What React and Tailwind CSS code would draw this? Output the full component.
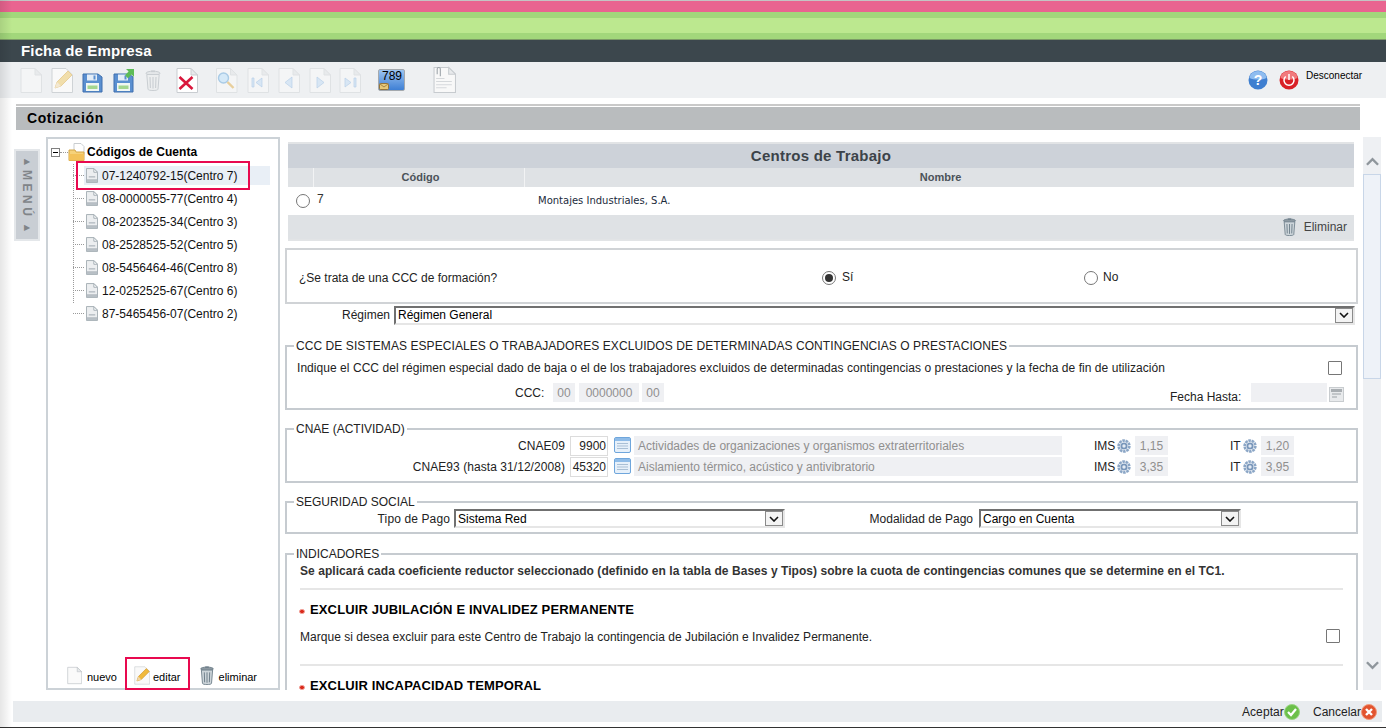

const FONT = "font-['Liberation_Sans',Arial,sans-serif]";

function PageIcon({ className = "", children, fold = "#e8eaec", stroke = "#cfd3d6", fill = "#fbfbfb" }) {
  return (
    <svg viewBox="0 0 22 25" className={className} fill="none">
      <path d="M1 .5h14l6.5 6.5v17.5H1z" fill={fill} stroke={stroke} />
      <path d="M15 .5V7h6.5z" fill={fold} stroke={stroke} />
      {children}
    </svg>
  );
}

function Floppy({ arrow }) {
  return (
    <svg viewBox="0 0 22 25" className="w-[22px] h-[25px]">
      <path d="M1 6h15l4 3v15H1z" fill="#5a8fd0" stroke="#3f6fae" />
      <rect x="5" y="6.5" width="10" height="6" fill="#e4edf7" />
      <rect x="11.5" y="7.5" width="2" height="4" fill="#5a8fd0" />
      <rect x="4" y="15" width="13" height="8" fill="#f1f6f3" />
      <rect x="5.5" y="17.5" width="10" height="3.5" fill="#a4d68f" />
      {arrow && <path d="M13 1h8v8l-2.4-2.4-3.6 3.6-3-3 3.6-3.6z" fill="#5dbb56" />}
    </svg>
  );
}

function Trash({ className = "", faded }) {
  const c = faded ? "#c9ced2" : "#6f7f8b";
  return (
    <svg viewBox="0 0 16 21" className={className}>
      <ellipse cx="8" cy="3.2" rx="7" ry="2" fill={faded ? "#e4e7e9" : "#8c98a1"} stroke={c} />
      <rect x="6" y=".5" width="4" height="1.6" fill={c} />
      <path d="M1.8 4.5h12.4L13 19.2c-.1.9-2.4 1.3-5 1.3s-4.9-.4-5-1.3z" fill={faded ? "#eceeef" : "#cdd5da"} stroke={c} />
      <path d="M5 7l.4 11M8 7v11.5M11 7l-.4 11" stroke={c} strokeWidth="1.1" />
    </svg>
  );
}

function Pencil({ className = "", faded }) {
  return (
    <svg viewBox="0 0 22 25" className={className}>
      <path d="M1 .5h14l6.5 6.5v17.5H1z" fill="#f9f9f9" stroke="#cfd3d6" />
      <path d="M4 20l2-6L17 3l4 4-11 11z" fill={faded ? "#f1deab" : "#f0b93c"} stroke={faded ? "#e4c98d" : "#c98f22"} strokeWidth=".8" />
      <path d="M4 20l2-6 4 4z" fill={faded ? "#f3e8d2" : "#f0d7a8"} />
    </svg>
  );
}

function NavDoc({ d }) {
  return (
    <PageIcon className="w-[22px] h-[25px]" fill="#f4f5f6" stroke="#dfe2e4">
      <path d={d} fill="#d8e6f4" stroke="#b9d0e8" strokeWidth=".7" />
    </PageIcon>
  );
}

function LeafDoc() {
  return (
    <svg viewBox="0 0 13 16" className="w-[12px] h-[15px] shrink-0">
      <path d="M.5.5h8l4 4v11H.5z" fill="#eceef0" stroke="#a2abb2" />
      <path d="M8.5.5v4h4z" fill="#fff" stroke="#a2abb2" />
      <path d="M3 9.5h7" stroke="#9aa3aa" />
      <rect x="1" y="12" width="11" height="3" fill="#b7bec4" />
    </svg>
  );
}

function ListIcon() {
  return (
    <svg viewBox="0 0 17 16" className="w-[17px] h-[16px] shrink-0">
      <rect x=".5" y=".5" width="16" height="15" rx="1.5" fill="#e6f0fa" stroke="#6fa6dc" />
      <rect x="1" y="1" width="15" height="3" fill="#8fbce8" />
      <path d="M3 6.5h11M3 9h11M3 11.5h11" stroke="#a9bfd5" />
    </svg>
  );
}

function Gear() {
  return (
    <svg viewBox="0 0 14 14" className="w-[14px] h-[14px] shrink-0 mt-[3px]">
      <circle cx="7" cy="7" r="5.4" fill="none" stroke="#8ba6c6" strokeWidth="2.6" strokeDasharray="2.6 .7" />
      <circle cx="7" cy="7" r="3.6" fill="#7896ba" />
      <circle cx="7" cy="7" r="1.7" fill="#e4ebf3" />
    </svg>
  );
}

function Bullet() {
  return <span className="block w-[6px] h-[5px] rounded-full bg-[#d92a1c] border border-[#f3a49b] mt-[3px] shrink-0" />;
}

function Check({ className = "" }) {
  return <span className={`block w-[14px] h-[14px] border border-[#767676] bg-white rounded-[1px] shrink-0 ${className}`} />;
}

function Radio({ on }) {
  return (
    <span className="flex items-center justify-center w-[14px] h-[14px] rounded-full border border-[#767676] bg-white shrink-0">
      {on && <span className="block w-[8px] h-[8px] rounded-full bg-[#333]" />}
    </span>
  );
}

function SelectBox({ value, className = "" }) {
  return (
    <div className={`flex items-center h-[19px] border-t-2 border-l-2 border-[#707070] border-b-2 border-b-[#e6e6e6] border-r-2 border-r-[#e6e6e6] bg-white ${className}`}>
      <span className="flex-1 pl-[2px] pt-px text-[12px] text-black leading-[15px]">{value}</span>
      <span className="flex items-center justify-center w-[18px] h-[15px] border border-[#8a8a8a] bg-[#f3f3f3]">
        <svg viewBox="0 0 10 6" className="w-[10px] h-[6px]"><path d="M1 1l4 4 4-4" fill="none" stroke="#111" strokeWidth="1.6" /></svg>
      </span>
    </div>
  );
}

function Grey({ className = "", children }) {
  return <span className={`flex items-center h-[19px] pt-px bg-[#eff0f3] text-[#8f8f8f] text-[12px] shrink-0 ${className}`}>{children}</span>;
}

function Field({ title, className = "", legendClass = "", children }) {
  return (
    <fieldset className={`border-2 border-[#c6cbd0] mx-0 min-w-0 ${className}`}>
      <legend className={`ml-[7px] px-[2px] text-[12px] leading-[14px] text-[#222] ${legendClass}`}>{title}</legend>
      {children}
    </fieldset>
  );
}

const nodes = [
  "07-1240792-15(Centro 7)",
  "08-0000055-77(Centro 4)",
  "08-2023525-34(Centro 3)",
  "08-2528525-52(Centro 5)",
  "08-5456464-46(Centro 8)",
  "12-0252525-67(Centro 6)",
  "87-5465456-07(Centro 2)",
];

function Toolbar() {
  return (
    <div className="flex items-center h-[36px] bg-[#eef0f2] pl-[20px] pr-[24px] shrink-0">
      <PageIcon className="w-[22px] h-[25px]" fill="#f4f5f6" stroke="#dfe2e4" />
      <span className="ml-[9px]"><Pencil className="w-[22px] h-[25px] block" faded /></span>
      <span className="ml-[9px]"><Floppy /></span>
      <span className="ml-[9px]"><Floppy arrow /></span>
      <span className="ml-[10px]"><Trash className="w-[16px] h-[21px] block" faded /></span>
      <span className="ml-[15px]">
        <PageIcon className="w-[22px] h-[25px] block" fill="#fff" stroke="#c9cdd1">
          <path d="M3.5 9l13 12M16.5 9l-13 12" stroke="#d9173c" strokeWidth="2.6" />
        </PageIcon>
      </span>
      <span className="ml-[17px]">
        <PageIcon className="w-[23px] h-[25px] block" fill="#f4f5f6" stroke="#dfe2e4">
          <circle cx="8" cy="10" r="5" fill="#d5e9f8" stroke="#a9cbe6" strokeWidth="1.4" />
          <path d="M12 14l6 6" stroke="#e8cf9c" strokeWidth="2.4" />
        </PageIcon>
      </span>
      <span className="ml-[9px]"><NavDoc d="M5 10h2v9H5zM15 10v9l-6-4.5z" /></span>
      <span className="ml-[9px]"><NavDoc d="M14 9v11l-7-5.5z" /></span>
      <span className="ml-[9px]"><NavDoc d="M8 9v11l7-5.5z" /></span>
      <span className="ml-[8px]"><NavDoc d="M15 10h2v9h-2zM6 10v9l6-4.5z" /></span>
      <span className="ml-[17px] relative block w-[27px] h-[22px] rounded-[2px] bg-gradient-to-b from-[#9cc4f0] to-[#3e7fd4] border border-[#a4a9ae]">
        <span className="absolute right-[2px] top-[-1px] text-[12px] leading-[14px] text-black">789</span>
        <svg viewBox="0 0 10 7" className="absolute left-0 bottom-0 w-[10px] h-[7px]"><rect x=".5" y=".5" width="9" height="6" rx="1" fill="#e6c878" stroke="#94743a" /><path d="M1 1l4 3 4-3" fill="none" stroke="#94743a" strokeWidth=".8" /></svg>
      </span>
      <span className="ml-[28px]">
        <PageIcon className="w-[23px] h-[28px] block" fill="#f8f8f8" stroke="#c7cbcf">
          <path d="M3 11h8M3 14h15M3 17h15M3 20h10" stroke="#d5d8db" />
          <path d="M4 7V2a1.5 1.5 0 013 0v7" fill="none" stroke="#9ba2a8" />
        </PageIcon>
      </span>
      <span className="ml-auto flex items-center">
        <svg viewBox="0 0 20 20" className="w-[20px] h-[20px]">
          <circle cx="10" cy="10" r="9.5" fill="#3f7fd0" />
          <path d="M1.5 8a8.5 7 0 0117 0c-4 2-13 2-17 0z" fill="#8fbdf0" />
          <text x="10" y="15" textAnchor="middle" fontSize="14" fontWeight="700" fill="#fff" fontFamily="Liberation Sans">?</text>
        </svg>
        <svg viewBox="0 0 20 20" className="w-[20px] h-[20px] ml-[11px]">
          <circle cx="10" cy="10" r="9.5" fill="#d91f26" />
          <path d="M1.5 8a8.5 7 0 0117 0c-4 2-13 2-17 0z" fill="#f17a7d" />
          <path d="M6.7 6.5a5 5 0 106.6 0" fill="none" stroke="#fff" strokeWidth="1.5" />
          <path d="M10 4v6" stroke="#fff" strokeWidth="1.5" />
        </svg>
        <span className="ml-[7px] w-[56px] text-[10px] leading-[12px] -mt-[8px] text-black">Desconectar</span>
      </span>
    </div>
  );
}

function Tree() {
  return (
    <div className="relative w-[234px] h-[553px] ml-[6px] border-2 border-[#ccd2d7] flex flex-col bg-white shrink-0">
      <div className="flex items-center h-[24px] pt-[3px] pl-[3px]">
        <span className="flex items-center justify-center w-[9px] h-[9px] border border-[#808080] bg-white">
          <span className="block w-[5px] h-px bg-black" />
        </span>
        <span className="w-[8px] border-t border-dotted border-[#999]" />
        <svg viewBox="0 0 17 18" className="w-[17px] h-[18px] -mt-[1px]">
          <path d="M6 .5h7l3 3v8H6z" fill="#fff" stroke="#c9cdd0" />
          <path d="M1 7h6l1 2h8v8.5H1z" fill="#f6d27a" stroke="#d3a648" />
          <path d="M1 11h15v6.5H1z" fill="#f3c25a" />
        </svg>
        <span className="ml-[2px] text-[12px] tracking-[0.05px] font-bold text-black leading-[15px]">Códigos de Cuenta</span>
      </div>
      <div className="relative ml-[25px] mt-[1px]">
        <span className="absolute left-0 top-0 h-[139px] border-l border-dotted border-[#9a9a9a]" />
        {nodes.map((n, i) => (
          <div key={n} className="flex items-center h-[23px]">
            <span className="w-[11px] border-t border-dotted border-[#9a9a9a] shrink-0" />
            <span className={`flex items-center h-[19px] w-[186px] ${i === 0 ? "bg-[#e9eff6]" : ""}`}>
              <span className="ml-[2px]"><LeafDoc /></span>
              <span className="ml-[4px] text-[12px] leading-[14px] text-[#111]">{n}</span>
            </span>
          </div>
        ))}
      </div>
      <div className="mt-auto flex items-end h-[31px] pb-[3px] pl-[19px] text-[11px] leading-[13px] text-black">
        <PageIcon className="w-[15px] h-[19px]" fill="#fafafa" stroke="#bfc4c8" />
        <span className="ml-[5px] mb-[1px]">nuevo</span>
        <span className="ml-[17px]"><Pencil className="w-[16px] h-[19px] block" /></span>
        <span className="ml-[3px] mb-[1px]">editar</span>
        <span className="ml-[18px]"><Trash className="w-[16px] h-[19px] block" /></span>
        <span className="ml-[4px] mb-[1px]">eliminar</span>
      </div>
      <span className="absolute left-[28px] top-[22px] w-[174px] h-[29px] border-2 border-[#e8094f]" />
      <span className="absolute left-[77px] top-[518px] w-[65px] h-[33px] border-2 border-[#e8094f]" />
    </div>
  );
}

function Menu() {
  return (
    <div className="w-[26px] h-[92px] ml-[14px] mt-[12px] border-2 border-[#e4e7ea] bg-[#c9ced4] flex flex-col items-center justify-center gap-[4px] text-[#808488] shrink-0">
      <span className="text-[8px] leading-[8px]">▶</span>
      <span className="text-[12px] font-bold leading-[12px] tracking-[3.5px] [writing-mode:vertical-rl]">MENÚ</span>
      <span className="text-[8px] leading-[8px]">▶</span>
    </div>
  );
}

function Panel() {
  return (
    <div className="ml-[5px] w-[1073px] h-[553px] overflow-hidden shrink-0 text-[12px] text-[#222]">
      <div className="ml-[3px] w-[1066px] mt-[5px] border-t-2 border-b-2 border-[#e2e4e6]">
        <div className="h-[24px] bg-[#cdd2d9] flex items-center justify-center text-[15px] tracking-[0.25px] font-bold text-[#3c4349]">Centros de Trabajo</div>
        <div className="flex h-[19px] bg-[#dfe2e5] text-[11px] font-bold text-[#4b5259] leading-[19px] text-center">
          <span className="w-[25px]" />
          <span className="w-[211px] border-l border-[#f2f3f4] pl-[3px]">Código</span>
          <span className="flex-1 border-l border-[#f2f3f4] pl-[2px]">Nombre</span>
        </div>
        <div className="flex items-center h-[28px] bg-white">
          <span className="ml-[8px] -mt-[1px]"><Radio /></span>
          <span className="ml-[7px] -mt-[4px] w-[221px] text-[12px] text-[#333]">7</span>
          <span className="-mt-[1px] font-['DejaVu_Sans',sans-serif] text-[10px] text-[#1c2b3c]">Montajes Industriales, S.A.</span>
        </div>
        <div className="flex items-center justify-end h-[24px] bg-[#dfe2e5] pr-[7px] text-[12px] text-[#444]">
          <Trash className="w-[15px] h-[18px]" />
          <span className="ml-[7px]">Eliminar</span>
        </div>
      </div>
      <div className="mt-[7px] h-[56px] pt-[3px] border-2 border-[#d0d3d6] flex items-center">
        <span className="ml-[12px] w-[523px]">¿Se trata de una CCC de formación?</span>
        <Radio on />
        <span className="ml-[6px] w-[242px] -mt-[2px]">Sí</span>
        <Radio />
        <span className="ml-[5px] -mt-[2px]">No</span>
      </div>
      <div className="flex items-center h-[20px] mt-[1px]">
        <span className="w-[105px] text-right">Régimen</span>
        <SelectBox value="Régimen General" className="ml-[4px] w-[961px]" />
      </div>
      <Field title="CCC DE SISTEMAS ESPECIALES O TRABAJADORES EXCLUIDOS DE DETERMINADAS CONTINGENCIAS O PRESTACIONES" legendClass="tracking-[0.07px]" className="mt-[14px] h-[71px]">
        <div className="flex items-center h-[20px] mt-[5px] pl-[10px]">
          <span className="flex-1 tracking-[0.05px]">Indique el CCC del régimen especial dado de baja o el de los trabajadores excluidos de determinadas contingencias o prestaciones y la fecha de fin de utilización</span>
          <Check className="mr-[14px] -mt-[1px]" />
        </div>
        <div className="flex items-center h-[19px] mt-[5px]">
          <span className="ml-[228px] w-[30px] shrink-0">CCC:</span>
          <Grey className="ml-[8px] w-[22px] justify-center">00</Grey>
          <Grey className="ml-[4px] w-[60px] justify-center">0000000</Grey>
          <Grey className="ml-[3px] w-[22px] justify-center">00</Grey>
          <span className="ml-[506px] w-[72px] mt-[9px] whitespace-nowrap shrink-0">Fecha Hasta:</span>
          <Grey className="ml-[9px] w-[76px]" />
          <svg viewBox="0 0 15 15" className="ml-[2px] mt-[4px] w-[15px] h-[15px] shrink-0"><rect x=".5" y=".5" width="14" height="14" fill="#e8eaec" stroke="#c8cccf" /><rect x="2" y="2" width="11" height="3" fill="#a9aeb2" /><path d="M3 7h9M3 10h5" stroke="#b5babd" strokeWidth="1.4" /></svg>
        </div>
      </Field>
      <Field title="CNAE (ACTIVIDAD)" className="mt-[12px] h-[61px]">
        <div className="flex h-[20px]">
          <span className="w-[278px] text-right leading-[21px] tracking-[0.06px]">CNAE09</span>
          <CnaeRest code="9900" desc="Actividades de organizaciones y organismos extraterritoriales" ims="1,15" it="1,20" />
        </div>
        <div className="flex h-[20px] mt-[1px]">
          <span className="w-[278px] text-right leading-[21px] tracking-[0.06px]">CNAE93 (hasta 31/12/2008)</span>
          <CnaeRest code="45320" desc="Aislamiento térmico, acústico y antivibratorio" ims="3,35" it="3,95" />
        </div>
      </Field>
      <Field title="SEGURIDAD SOCIAL" className="mt-[12px] h-[39px]">
        <div className="flex items-center h-[19px]">
          <span className="w-[163px] text-right tracking-[0.12px] pt-px">Tipo de Pago</span>
          <SelectBox value="Sistema Red" className="ml-[4px] w-[331px]" />
          <span className="w-[188px] text-right pt-px">Modalidad de Pago</span>
          <SelectBox value="Cargo en Cuenta" className="ml-[6px] w-[262px]" />
        </div>
      </Field>
      <Field title="INDICADORES" className="mt-[13px] h-[170px]">
        <div className="pl-[13px]">
          <div className="font-bold text-[#333] h-[25px] leading-[16px] mt-[2px] tracking-[0.05px]">Se aplicará cada coeficiente reductor seleccionado (definido en la tabla de Bases y Tipos) sobre la cuota de contingencias comunes que se determine en el TC1.</div>
          <div className="w-[1043px] border-t-2 border-[#e6e6e6]" />
          <Indicator title="EXCLUIR JUBILACIÓN E INVALIDEZ PERMANENTE" />
          <div className="flex items-center justify-between w-[1040px] h-[20px] mt-[9px]">
            <span className="tracking-[0.03px]">Marque si desea excluir para este Centro de Trabajo la contingencia de Jubilación e Invalidez Permanente.</span>
            <Check className="-mt-[2px]" />
          </div>
          <div className="w-[1043px] border-t-2 border-[#e6e6e6] mt-[17px]" />
          <Indicator title="EXCLUIR INCAPACIDAD TEMPORAL" />
        </div>
      </Field>
    </div>
  );
}

function Indicator({ title }) {
  return (
    <div className="flex items-center h-[16px] mt-[12px] -ml-[1px] gap-[5px] text-[13px] font-bold text-black leading-[16px] tracking-[0.14px]">
      <Bullet />
      <span>{title}</span>
    </div>
  );
}

function CnaeRest({ code, desc, ims, it }) {
  return (
    <>
      <span className="ml-[5px] w-[38px] h-[20px] border border-[#dcdcdc] text-right pr-[1px] leading-[19px] text-[#222]">{code}</span>
      <span className="ml-[6px] mt-[1px]"><ListIcon /></span>
      <Grey className="ml-[3px] w-[428px] pl-[4px]">{desc}</Grey>
      <span className="ml-[32px] w-[23px] leading-[20px]">IMS</span>
      <Gear />
      <Grey className="ml-[4px] w-[33px] justify-center">{ims}</Grey>
      <span className="ml-[62px] w-[13px] leading-[20px]">IT</span>
      <Gear />
      <Grey className="ml-[4px] w-[33px] justify-center">{it}</Grey>
    </>
  );
}

function Scrollbar() {
  return (
    <div className="ml-[5px] w-[18px] h-[553px] bg-[#eef0f3] flex flex-col items-center shrink-0">
      <svg viewBox="0 0 14 9" className="w-[13px] h-[9px] mt-[20px] shrink-0"><path d="M1 8l6-6 6 6" fill="none" stroke="#8f969c" strokeWidth="2.6" /></svg>
      <div className="w-[18px] h-[205px] mt-[8px] bg-[#eef2f8] border border-[#c8d6e8]" />
      <svg viewBox="0 0 14 9" className="w-[13px] h-[9px] mt-auto mb-[20px] shrink-0"><path d="M1 1l6 6 6-6" fill="none" stroke="#8f969c" strokeWidth="2.6" /></svg>
    </div>
  );
}

export default function App() {
  return (
    <div className={`relative w-[1386px] h-[728px] overflow-hidden bg-white flex flex-col ${FONT}`}>
      <div className="h-px bg-[#c4c4c4] shrink-0" />
      <div className="h-[11px] bg-[#e96490] shrink-0" />
      <div className="h-[6px] bg-[#a2d77b] shrink-0" />
      <div className="h-[15px] bg-[#bce88f] shrink-0" />
      <div className="h-[6px] bg-[#a2d77b] shrink-0" />
      <div className="h-px bg-[#7b9a66] shrink-0" />
      <div className="h-[22px] bg-[#3c474d] pl-[21px] text-[15px] font-bold text-white leading-[22px] tracking-[0.15px] shrink-0">Ficha de Empresa</div>
      <Toolbar />
      <div className="mt-[6px] ml-[16px] w-[1344px] border-t-2 border-[#c9c9c9] shrink-0">
        <div className="mt-px h-[23px] bg-[#b9bcbe] pl-[11px] text-[14px] font-bold text-black leading-[23px] tracking-[0.6px]">Cotización</div>
      </div>
      <div className="flex items-start mt-[7px] shrink-0">
        <Menu />
        <Tree />
        <Panel />
        <Scrollbar />
      </div>
      <div className="flex items-center justify-end mt-[11px] ml-[13px] w-[1369px] h-[21px] bg-[#e9ecef] text-[12px] text-[#222] pr-[5px] pt-px shrink-0">
        <span className="tracking-[0.1px]">Aceptar</span>
        <svg viewBox="0 0 16 16" className="w-[16px] h-[16px]"><circle cx="8" cy="8" r="7.5" fill="#6cc04a" stroke="#9ad483" /><path d="M4 8l3 3 5-6" fill="none" stroke="#fff" strokeWidth="2.2" /></svg>
        <span className="ml-[13px]">Cancelar</span>
        <svg viewBox="0 0 16 16" className="w-[16px] h-[16px]"><circle cx="8" cy="8" r="7.5" fill="#e2542f" stroke="#f09a7c" /><path d="M5 5l6 6M11 5l-6 6" stroke="#fff" strokeWidth="2.4" /></svg>
      </div>
      <div className="mt-auto h-px bg-[#333] shrink-0" />
      <span className="absolute left-0 top-0 w-[12px] h-full bg-gradient-to-r from-black/10 to-transparent" />
    </div>
  );
}
